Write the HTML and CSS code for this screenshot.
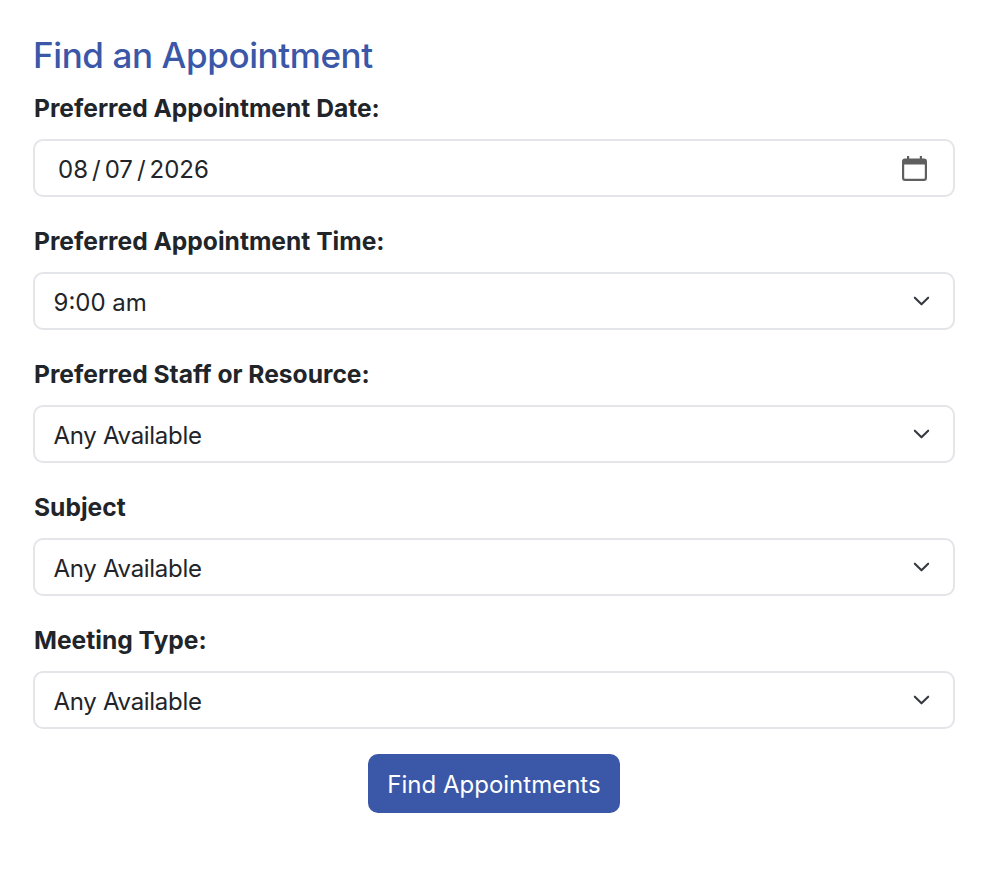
FILE: index.html
```html
<!DOCTYPE html>
<html lang="en">
<head>
<meta charset="utf-8">
<title>Find an Appointment</title>
<link rel="stylesheet" href="styles.css">
</head>
<body>
<form class="form">
  <h1 class="title">Find an Appointment</h1>
  <div class="field">
    <div class="label">Preferred Appointment Date:</div>
    <div class="control control-date">
      <span class="date"><span>08</span><span class="sep">/</span><span>07</span><span class="sep">/</span><span>2026</span></span>
      <svg class="cal" viewBox="0 0 25 25" width="25" height="25"><path fill="#5f5f5f" d="M5 0h2.200v2.500h10.600V0H20v2.500h2A3 3 0 0 1 25 5.500V22a3 3 0 0 1-3 3H3a3 3 0 0 1-3-3V5.500a3 3 0 0 1 3-3h2zM2.200 8.500V22a.8.8 0 0 0 .8.8h19a.8.8 0 0 0 .8-.8V8.500z"/></svg>
    </div>
  </div>
  <div class="field">
    <div class="label">Preferred Appointment Time:</div>
    <div class="control"><span class="value">9:00 am</span><svg class="chev" viewBox="0 0 20 12" width="17" height="10"><path d="M2 2l8 8 8-8" fill="none" stroke="#343a40" stroke-width="2.500" stroke-linecap="round" stroke-linejoin="round"/></svg></div>
  </div>
  <div class="field">
    <div class="label">Preferred Staff or Resource:</div>
    <div class="control"><span class="value any">Any Available</span><svg class="chev" viewBox="0 0 20 12" width="17" height="10"><path d="M2 2l8 8 8-8" fill="none" stroke="#343a40" stroke-width="2.500" stroke-linecap="round" stroke-linejoin="round"/></svg></div>
  </div>
  <div class="field">
    <div class="label">Subject</div>
    <div class="control"><span class="value any">Any Available</span><svg class="chev" viewBox="0 0 20 12" width="17" height="10"><path d="M2 2l8 8 8-8" fill="none" stroke="#343a40" stroke-width="2.500" stroke-linecap="round" stroke-linejoin="round"/></svg></div>
  </div>
  <div class="field">
    <div class="label">Meeting Type:</div>
    <div class="control"><span class="value any">Any Available</span><svg class="chev" viewBox="0 0 20 12" width="17" height="10"><path d="M2 2l8 8 8-8" fill="none" stroke="#343a40" stroke-width="2.500" stroke-linecap="round" stroke-linejoin="round"/></svg></div>
  </div>
  <div class="actions"><button type="button" class="btn">Find Appointments</button></div>
</form>
</body>
</html>
```
FILE: styles.css
```css
* { box-sizing: border-box; }
html, body { margin: 0; background: #fff; }
body { font-family: Inter, "Liberation Sans", sans-serif; color: #212529; }
.form { padding: 33px 33px 0; display: flex; flex-direction: column; }
.title { margin: 0 0 12px; font-size: 35px; line-height: 44px; font-weight: 500; color: #3b57a8; letter-spacing: -0.400px; }
.field { display: flex; flex-direction: column; margin-bottom: 25px; }
.label { font-size: 24.600px; line-height: 30px; font-weight: 700; height: 30px; margin: 4px 0 16px 1px; }
.control { height: 58px; border: 2px solid #e3e5e8; border-radius: 10px; padding: 0 23px 0 18.500px; display: flex; align-items: center; justify-content: space-between; font-size: 24px; color: #212529; }
.control-date { padding: 0 26px 0 23px; }
.date { display: flex; padding-top: 2px; }
.value { padding-top: 2px; }
.sep { margin: 0 4px; }
.any { letter-spacing: -0.300px; }
.actions { display: flex; justify-content: center; }
.btn { width: 252px; height: 59px; border: 0; border-radius: 10px; background: #3b57a8; color: #fff; font: 400 24px Inter, "Liberation Sans", sans-serif; padding: 2px 0 0; }
```
